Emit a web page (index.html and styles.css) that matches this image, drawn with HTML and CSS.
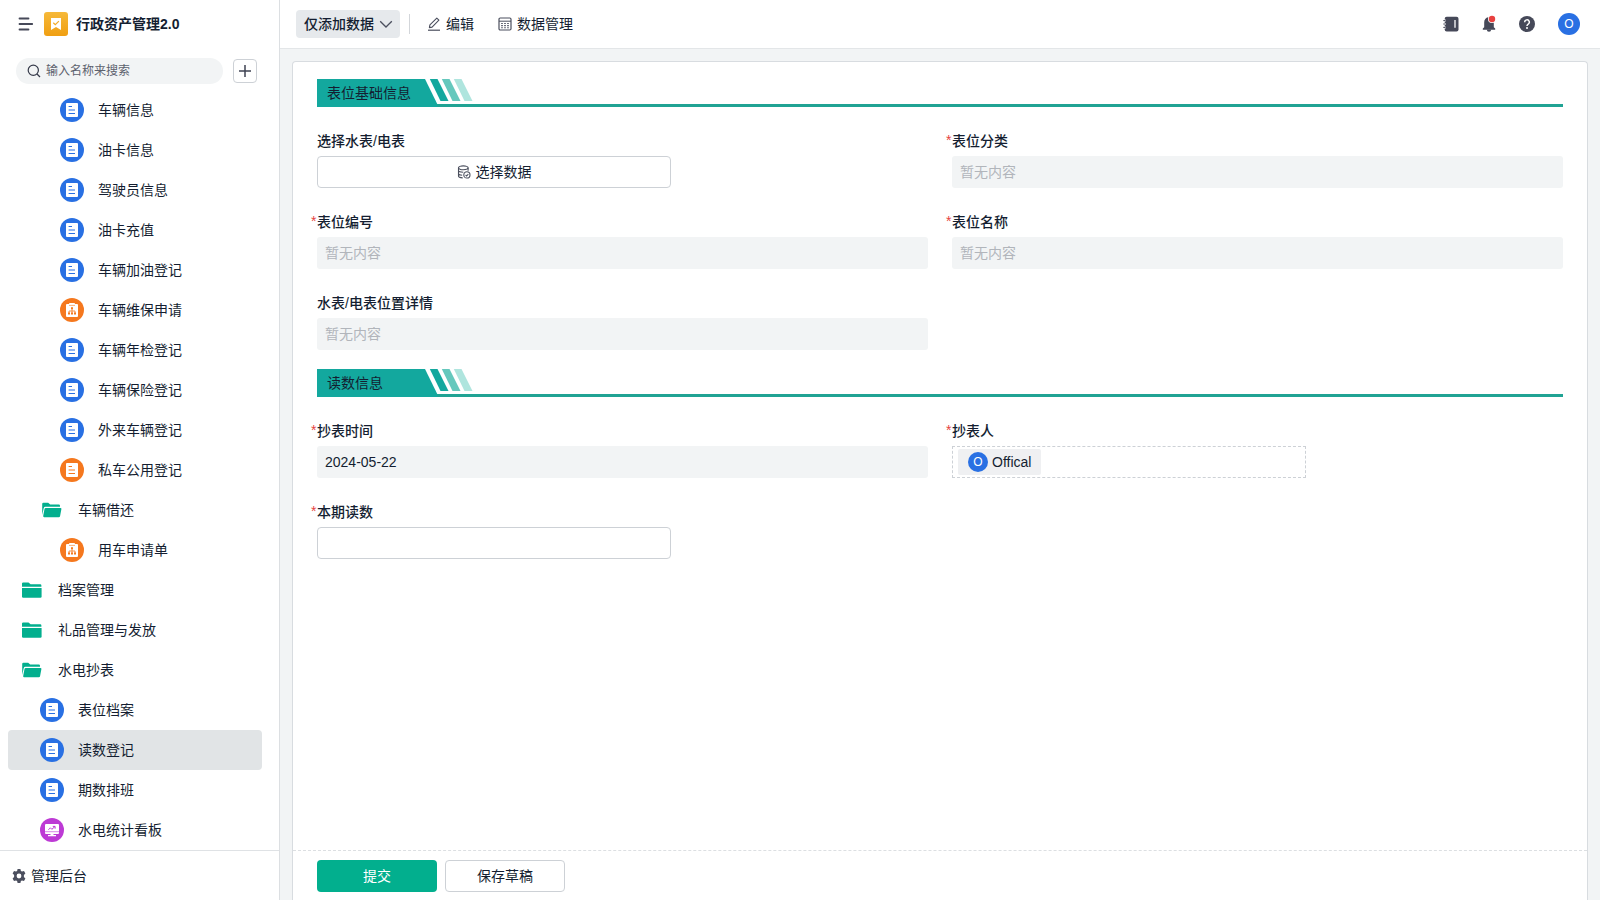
FILE: index.html
```html
<!DOCTYPE html>
<html lang="zh-CN">
<head>
<meta charset="utf-8">
<title>行政资产管理2.0</title>
<link rel="stylesheet" href="styles.css">
</head>
<body>
<svg class="sprite" aria-hidden="true">
  <symbol id="i-form" viewBox="0 0 24 24">
    <circle cx="12" cy="12" r="12" fill="currentColor"/>
    <rect x="6" y="5" width="12" height="14" rx="1" fill="#fff"/>
    <path d="M8.600 8.500h3.400M8.600 12h6.400M8.600 15.500h6.400" stroke="currentColor" stroke-width="1.100" fill="none"/>
  </symbol>
  <symbol id="i-flow" viewBox="0 0 24 24">
    <circle cx="12" cy="12" r="12" fill="currentColor"/>
    <rect x="6" y="6" width="12" height="13" rx="1" fill="#fff"/>
    <path d="M9.200 5h5.600v2H9.200z" fill="#fff"/>
    <path d="M9 7.400h6" stroke="currentColor" stroke-width=".6"/>
    <path d="M12 11v4M9 15v-2h6v2" stroke="currentColor" stroke-width=".8" fill="none"/>
    <path d="M11 9.200h2v2h-2zM8 14.500h2v2H8zM11 14.500h2v2h-2zM14 14.500h2v2h-2z" fill="currentColor"/>
  </symbol>
  <symbol id="i-board" viewBox="0 0 24 24">
    <circle cx="12" cy="12" r="12" fill="currentColor"/>
    <path d="M6 6h12a1 1 0 0 1 1 1v8a1 1 0 0 1-1 1h-4.500v1h2.500v1.200H8V17h2.500v-1H6a1 1 0 0 1-1-1V7a1 1 0 0 1 1-1z" fill="#fff"/>
    <path d="M5 13.700h14" stroke="currentColor" stroke-width=".6"/>
    <path d="M8.400 11.800l2-2 1.400 1.500 3-2.600M12.800 8.400h2.300v2.300" stroke="currentColor" stroke-width="1" fill="none"/>
  </symbol>
  <symbol id="i-folder" viewBox="0 0 24 24">
    <path d="M2 8.800V5.600a1.200 1.200 0 0 1 1.200-1.200h5.300l2.100 1.800h9.600a1.200 1.200 0 0 1 1.200 1.200v1.400z" fill="currentColor"/>
    <path d="M2 9.900h19.600v8.600a1.200 1.200 0 0 1-1.200 1.200H3.200A1.200 1.200 0 0 1 2 18.500z" fill="currentColor"/>
  </symbol>
  <symbol id="i-open" viewBox="0 0 24 24">
    <path d="M2.200 17V6a1.200 1.200 0 0 1 1.200-1.200h4.800l2 1.800h8.600A1.200 1.200 0 0 1 20 7.800v1H5.400a1.800 1.800 0 0 0-1.700 1.400z" fill="currentColor"/>
    <path d="M5.700 9.900h14.700a1 1 0 0 1 1 1.200l-1.300 6.900a1.400 1.400 0 0 1-1.400 1.200H4.200a1 1 0 0 1-1-1.200l1.300-7a1.300 1.300 0 0 1 1.200-1.100z" fill="currentColor"/>
  </symbol>
  <symbol id="i-banner" viewBox="0 0 156 28">
    <path d="M0 0h108l12.500 25.500V28H0z" fill="#13a89e"/>
    <path d="M112.800 0h7.700l11 22h-8z" fill="#13a89e"/>
    <path d="M124.800 0h7.700l11 22h-8z" fill="#65c8bd"/>
    <path d="M136.800 0h7.700l11 22h-8z" fill="#afe5de"/>
  </symbol>
</svg>
<div class="app">
  <aside class="sidebar">
    <header class="brand">
      <button class="icon-button" aria-label="收起菜单"><svg width="16" height="16" viewBox="0 0 16 16"><path d="M1.500 2.500h9M1.500 8h12.700M1.500 13.500h9" stroke="#464959" stroke-width="1.800" stroke-linecap="round"/></svg></button>
      <svg class="logo" width="24" height="24" viewBox="0 0 24 24"><defs><linearGradient id="gold" x2="0" y2="1"><stop stop-color="#f6b93a"/><stop offset="1" stop-color="#f09f12"/></linearGradient></defs><rect width="24" height="24" rx="3" fill="url(#gold)"/><path d="M7 6h10v12l-5-3-5 3z" fill="#fff"/><path d="M9.300 10.700l2 1.900 3.600-3.500" fill="none" stroke="#f3aa24" stroke-width="1.200"/></svg>
      <h1 class="brand-name">行政资产管理2.0</h1>
    </header>
    <div class="search-row">
      <label class="search">
        <svg width="14" height="14" viewBox="0 0 14 14"><circle cx="6.300" cy="6.300" r="5.100" fill="none" stroke="#353a4a" stroke-width="1.200"/><path d="M10 10l3 3" stroke="#353a4a" stroke-width="1.300"/></svg>
        <input class="search-input" type="text" placeholder="输入名称来搜索" aria-label="输入名称来搜索">
      </label>
      <button class="add-button" aria-label="新建"><svg width="14" height="14" viewBox="0 0 14 14"><path d="M7 1v12M1 7h12" stroke="#3f4353" stroke-width="1.500"/></svg></button>
    </div>
    <nav class="menu">
      <a class="item deep blue" href="#"><svg><use href="#i-form"/></svg><span>车辆信息</span></a>
      <a class="item deep blue" href="#"><svg><use href="#i-form"/></svg><span>油卡信息</span></a>
      <a class="item deep blue" href="#"><svg><use href="#i-form"/></svg><span>驾驶员信息</span></a>
      <a class="item deep blue" href="#"><svg><use href="#i-form"/></svg><span>油卡充值</span></a>
      <a class="item deep blue" href="#"><svg><use href="#i-form"/></svg><span>车辆加油登记</span></a>
      <a class="item deep orange" href="#"><svg><use href="#i-flow"/></svg><span>车辆维保申请</span></a>
      <a class="item deep blue" href="#"><svg><use href="#i-form"/></svg><span>车辆年检登记</span></a>
      <a class="item deep blue" href="#"><svg><use href="#i-form"/></svg><span>车辆保险登记</span></a>
      <a class="item deep blue" href="#"><svg><use href="#i-form"/></svg><span>外来车辆登记</span></a>
      <a class="item deep orange" href="#"><svg><use href="#i-form"/></svg><span>私车公用登记</span></a>
      <a class="item nested green" href="#"><svg><use href="#i-open"/></svg><span>车辆借还</span></a>
      <a class="item deep orange" href="#"><svg><use href="#i-flow"/></svg><span>用车申请单</span></a>
      <a class="item green" href="#"><svg><use href="#i-folder"/></svg><span>档案管理</span></a>
      <a class="item green" href="#"><svg><use href="#i-folder"/></svg><span>礼品管理与发放</span></a>
      <a class="item green" href="#"><svg><use href="#i-open"/></svg><span>水电抄表</span></a>
      <a class="item nested blue" href="#"><svg><use href="#i-form"/></svg><span>表位档案</span></a>
      <a class="item nested blue active" href="#" aria-current="page"><svg><use href="#i-form"/></svg><span>读数登记</span></a>
      <a class="item nested blue" href="#"><svg><use href="#i-form"/></svg><span>期数排班</span></a>
      <a class="item nested purple" href="#"><svg><use href="#i-board"/></svg><span>水电统计看板</span></a>
    </nav>
    <a class="admin" href="#">
      <svg width="14" height="14" viewBox="0 0 14 14"><path fill="#4b4f5e" fill-rule="evenodd" d="M5.600 0h2.800l.5 2 1.100.6 2-.6 1.400 2.500-1.500 1.400v2.200l1.500 1.400-1.400 2.500-2-.6-1.100.6-.5 2H5.600l-.5-2-1.100-.6-2 .6L.6 9.500l1.500-1.400V5.900L.6 4.500 2 2l2 .6 1.100-.6zM7 4.600a2.400 2.400 0 1 0 0 4.800 2.400 2.400 0 0 0 0-4.800z"/></svg>
      <span>管理后台</span>
    </a>
  </aside>

  <header class="topbar">
    <button class="mode">仅添加数据<svg width="14" height="14" viewBox="0 0 14 14"><path d="M1.200 4.300L7 10l5.800-5.700" fill="none" stroke="#4b4f5e" stroke-width="1.300"/></svg></button>
    <span class="divider"></span>
    <button class="tool"><svg width="14" height="14" viewBox="0 0 14 14"><path d="M1 13.200h12" stroke="#4b4f5e" stroke-width="1.200"/><path d="M2.400 10.600l.5-2.700 6.900-6.800 2.100 2.100-6.800 6.900z" fill="none" stroke="#4b4f5e" stroke-width="1.100" stroke-linejoin="round"/></svg>编辑</button>
    <button class="tool"><svg width="14" height="14" viewBox="0 0 14 14"><rect x="1" y="1" width="12" height="12" rx="1.200" fill="none" stroke="#4b4f5e" stroke-width="1.200"/><path d="M1 4.200h12" stroke="#4b4f5e"/><path d="M3.200 6.500h1.600M6.200 6.500h1.600M9.200 6.500h1.600M3.200 8.600h1.600M6.200 8.600h1.600M9.200 8.600h1.600M3.200 10.700h1.600M6.200 10.700h1.600M9.200 10.700h1.600" stroke="#4b4f5e" stroke-width="1.100"/></svg>数据管理</button>
    <div class="actions">
      <button class="icon-button" aria-label="通讯录"><svg width="16" height="16" viewBox="0 0 16 16"><rect x="1.700" y=".7" width="13.800" height="14.800" rx="2" fill="#464959"/><path d="M.4 4.600h2.300M.4 8h2.300M.4 11.400h2.300" stroke="#fff" stroke-width="2"/><path d="M.3 4.600h2.200M.3 8h2.200M.3 11.400h2.200" stroke="#464959" stroke-width="1"/><path d="M12 3.900v7.900" stroke="#fff" stroke-width="1.300"/></svg></button>
      <button class="icon-button" aria-label="通知"><svg width="16" height="18" viewBox="0 0 16 18"><path d="M8 2.200c3 0 4.800 2 4.800 5v5l1.400 1.400v1.100H1.800v-1.100l1.400-1.400v-5c0-3 1.800-5 4.800-5z" fill="#464959"/><path d="M5.800 14.500a2.200 2.200 0 0 0 4.400 0z" fill="#464959"/><circle cx="11" cy="4" r="4" fill="#fff"/><circle cx="11" cy="4" r="3.200" fill="#e8413f"/></svg></button>
      <button class="icon-button" aria-label="帮助"><svg width="16" height="16" viewBox="0 0 16 16"><circle cx="8" cy="8" r="8" fill="#464959"/><path d="M5.700 6.200a2.300 2.300 0 1 1 3.500 1.900C8.300 8.700 8 9 8 10" fill="none" stroke="#fff" stroke-width="1.500"/><circle cx="8" cy="12" r="1" fill="#fff"/></svg></button>
      <button class="avatar" aria-label="Offical">O</button>
    </div>
  </header>

  <main class="content">
    <form class="panel">
      <div class="form-body">
        <h2 class="banner"><svg><use href="#i-banner"/></svg><span>表位基础信息</span></h2>
        <div class="fields">
          <div class="field">
            <span class="label">选择水表/电表</span>
            <button class="box short pick" type="button"><svg width="14" height="14" viewBox="0 0 14 14"><g fill="none" stroke="#4b4f5e" stroke-width="1.100"><ellipse cx="6.300" cy="2.800" rx="4.800" ry="1.900"/><path d="M1.500 2.800v8.300c0 1 1.800 1.700 4.200 1.800M11.100 2.800v3M1.500 5.600c0 1 2 1.700 4.800 1.700M1.500 8.400c0 1 1.500 1.600 3.700 1.800"/><circle cx="9.900" cy="9.900" r="3.100"/><path d="M8.600 10l1 1 1.700-1.900"/></g></svg>选择数据</button>
          </div>
          <div class="field">
            <label class="label required" for="kind">表位分类</label>
            <input class="box filled" id="kind" placeholder="暂无内容" readonly>
          </div>
          <div class="field">
            <label class="label required" for="code">表位编号</label>
            <input class="box filled" id="code" placeholder="暂无内容" readonly>
          </div>
          <div class="field">
            <label class="label required" for="name">表位名称</label>
            <input class="box filled" id="name" placeholder="暂无内容" readonly>
          </div>
          <div class="field">
            <label class="label" for="place">水表/电表位置详情</label>
            <input class="box filled" id="place" placeholder="暂无内容" readonly>
          </div>
        </div>
        <h2 class="banner"><svg><use href="#i-banner"/></svg><span>读数信息</span></h2>
        <div class="fields">
          <div class="field">
            <label class="label required" for="date">抄表时间</label>
            <input class="box filled" id="date" value="2024-05-22" readonly>
          </div>
          <div class="field">
            <span class="label required">抄表人</span>
            <div class="box short people"><span class="person"><span class="initial">O</span>Offical</span></div>
          </div>
          <div class="field">
            <label class="label required" for="reading">本期读数</label>
            <input class="box short" id="reading">
          </div>
        </div>
      </div>
      <footer class="form-footer">
        <button class="submit" type="submit">提交</button>
        <button class="draft" type="button">保存草稿</button>
      </footer>
    </form>
  </main>
</div>
</body>
</html>
```
FILE: styles.css
```css
* {
  box-sizing: border-box;
}

body {
  margin: 0;
  background: #fff;
}

body,
button,
input {
  color: #141e31;
  font: 14px/20px "Liberation Sans", "Noto Sans CJK SC", sans-serif;
}

h1,
h2 {
  margin: 0;
  font-size: 14px;
}

a {
  color: inherit;
  text-decoration: none;
}

button {
  display: flex;
  align-items: center;
  justify-content: center;
  padding: 0;
  border: 0;
  background: none;
  cursor: pointer;
}

svg {
  display: block;
  flex: none;
}

.sprite {
  position: absolute;
  width: 0;
  height: 0;
}

.app {
  display: grid;
  grid-template: 49px minmax(0, 1fr) / 280px minmax(0, 1fr);
  height: 100vh;
}

/* Sidebar */
.sidebar {
  display: flex;
  flex-direction: column;
  grid-row: 1 / 3;
  min-height: 0;
  border-right: 1px solid #dcdfe2;
}

.brand {
  display: flex;
  align-items: center;
  height: 48px;
  padding: 0 18px;
}

.logo {
  margin: 0 8px 0 10px;
}

.brand-name {
  font-weight: 700;
}

.search-row {
  display: flex;
  align-items: center;
  gap: 10px;
  padding: 10px 22px 6px 16px;
}

.search {
  display: flex;
  flex: 1;
  align-items: center;
  gap: 5px;
  height: 26px;
  padding: 0 11px;
  border-radius: 13px;
  background: #f2f4f5;
}

.search-input {
  width: 100%;
  min-width: 0;
  padding: 0;
  border: 0;
  outline: 0;
  background: none;
  font-size: 12px;
}

.search-input::placeholder {
  color: #5c616d;
}

.add-button {
  width: 24px;
  height: 24px;
  border: 1px solid #cdd1d6;
  border-radius: 4px;
}

.menu {
  flex: 1;
  min-height: 0;
  padding: 0 17px 0 8px;
  overflow: hidden;
}

.item {
  display: flex;
  align-items: center;
  gap: 14px;
  height: 40px;
  padding-left: 12px;
  border-radius: 4px;
}

.item span {
  color: #141e31;
}

.item svg {
  width: 24px;
  height: 24px;
}

.nested {
  padding-left: 32px;
}

.deep {
  padding-left: 52px;
}

.active {
  background: #e1e4e6;
}

.blue {
  color: #2970e3;
}

.orange {
  color: #f5781e;
}

.green {
  color: #02af8e;
}

.purple {
  color: #bd3ad5;
}

.admin {
  display: flex;
  align-items: center;
  gap: 5px;
  height: 50px;
  padding: 0 12px;
  border-top: 1px solid #dfe2e5;
}

/* Top bar */
.topbar {
  display: flex;
  align-items: center;
  padding: 0 20px 0 16px;
  border-bottom: 1px solid #e3e6e8;
}

.mode {
  gap: 5px;
  height: 28px;
  padding: 0 7px 0 8px;
  border-radius: 4px;
  background: #e6e9ec;
  font-weight: 500;
}

.divider {
  width: 1px;
  height: 20px;
  margin: 0 17px 0 9px;
  background: #d3d6da;
}

.tool {
  gap: 5px;
  margin-right: 24px;
}

.actions {
  display: flex;
  align-items: center;
  gap: 22px;
  margin-left: auto;
}

.avatar {
  width: 22px;
  height: 22px;
  margin-left: 1px;
  border-radius: 50%;
  background: #2970e3;
  color: #fff;
  font-size: 12px;
}

/* Form */
.content {
  display: flex;
  padding: 12px 12px 0;
  background: #f2f4f5;
}

.panel {
  display: flex;
  flex: 1;
  flex-direction: column;
  min-width: 0;
  border: 1px solid #d8dce0;
  border-bottom: 0;
  border-radius: 4px 4px 0 0;
  background: #fff;
}

.form-body {
  display: flex;
  flex: 1;
  flex-direction: column;
  gap: 19px;
  min-height: 0;
  padding: 17px 24px 0;
  overflow: hidden;
}

.banner {
  display: grid;
  grid-template-rows: 25px;
  height: 28px;
  border-bottom: 3px solid #20a394;
  font-weight: 400;
}

.banner svg,
.banner span {
  grid-area: 1 / 1;
}

.banner svg {
  width: 156px;
  height: 28px;
}

.banner span {
  z-index: 1;
  padding: 4px 0 0 10px;
}

.fields {
  display: grid;
  grid-template-columns: repeat(2, minmax(0, 1fr));
  gap: 24px;
  padding-top: 5px;
}

.field {
  display: flex;
  flex-direction: column;
  gap: 5px;
}

.label {
  position: relative;
  align-self: start;
  font-weight: 500;
}

.required::before {
  position: absolute;
  top: -1px;
  left: -6px;
  color: #e64340;
  content: "*";
}

.box {
  width: 100%;
  height: 32px;
  padding: 0 8px;
  border: 1px solid #cdd1d6;
  border-radius: 4px;
  outline: 0;
  background: #fff;
}

.short {
  max-width: 354px;
}

.pick {
  gap: 5px;
}

.filled {
  border: 0;
  border-radius: 3px;
  background: #f2f4f5;
}

.filled::placeholder {
  color: #b1b5bb;
}

.people {
  display: flex;
  align-items: center;
  padding: 0 5px;
  border-style: dashed;
  border-radius: 0;
}

.person {
  display: flex;
  align-items: center;
  gap: 4px;
  height: 26px;
  padding: 0 10px;
  border-radius: 2px;
  background: #eff0f2;
}

.initial {
  width: 20px;
  height: 20px;
  border-radius: 50%;
  background: #2970e3;
  color: #fff;
  font-size: 12px;
  text-align: center;
}

.form-footer {
  display: flex;
  gap: 8px;
  padding: 9px 24px 8px;
  border-top: 1px dashed #dcdfe2;
}

.submit,
.draft {
  width: 120px;
  height: 32px;
  border-radius: 4px;
}

.submit {
  background: #02af8e;
  color: #fff;
}

.draft {
  border: 1px solid #cdd1d6;
}
```
